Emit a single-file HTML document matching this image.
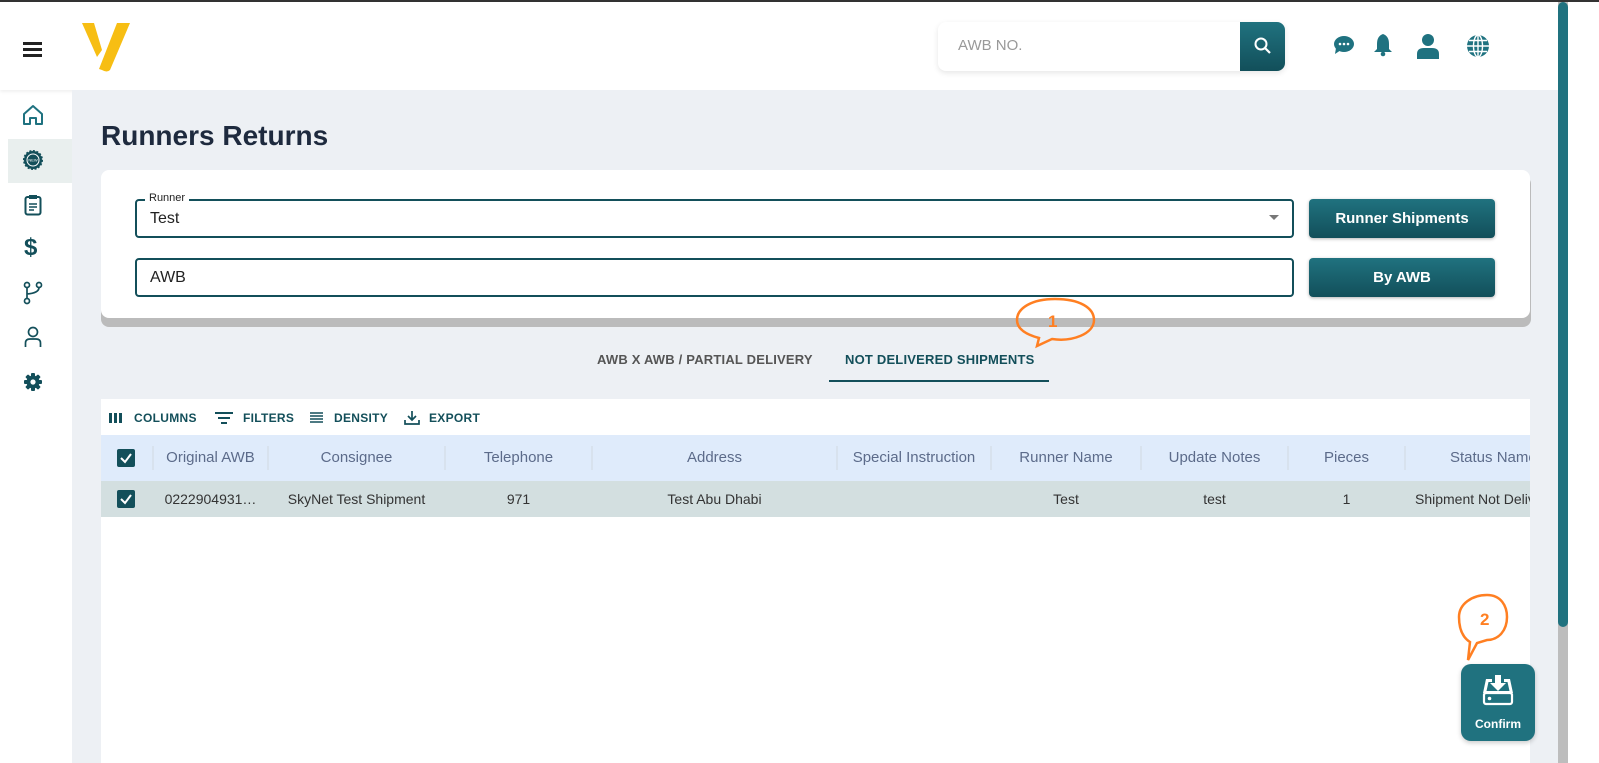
<!DOCTYPE html>
<html><head><meta charset="utf-8"><style>
*{box-sizing:border-box;margin:0;padding:0}
body{width:1599px;height:763px;overflow:hidden;background:#fff;font-family:"Liberation Sans",sans-serif;position:relative}
.abs{position:absolute}
.btn{position:absolute;left:1309px;width:186px;height:39px;border-radius:4px;background:linear-gradient(#20727f,#124f5a);color:#fff;font-weight:bold;font-size:15px;display:flex;align-items:center;justify-content:center;box-shadow:0 1px 3px rgba(0,0,0,.3)}
.field{position:absolute;left:135px;width:1159px;height:39px;border:2px solid #134f5a;border-radius:4px;font-size:16px;color:#222;padding-left:13px;display:flex;align-items:center}
.th,.td{position:absolute;display:flex;align-items:center;justify-content:center;font-size:15px;white-space:nowrap;overflow:hidden}
.th{color:#5c6b8a;top:435px;height:45px}
.td{color:#333;top:481px;height:36px;font-size:14px}
.sep{position:absolute;top:446px;width:2px;height:24px;background:#d8e2ee}
.cb{position:absolute;left:117px;width:18px;height:18px;background:#134f5a;border-radius:2px}
.tb{position:absolute;top:411px;font-size:12px;font-weight:bold;color:#134f5a;letter-spacing:.3px}
</style></head><body>
<div class="abs" style="left:0;top:0;width:1599px;height:2px;background:#333"></div>
<div class="abs" style="left:0;top:2px;width:1558px;height:88px;background:#fff;box-shadow:0 2px 3px rgba(0,0,0,.06)"></div>
<div class="abs" style="left:23px;top:42px;width:19px;height:3px;background:#222;box-shadow:0 6px 0 #222,0 12px 0 #222"></div>
<svg class="abs" style="left:80px;top:20px" width="52" height="52" viewBox="0 0 52 52"><path d="M2 3 L14 3 L22 30 L17 37 Z" fill="#f7be13"/><path d="M37 3 L50 3 L30 50 Q27 53 22 50 L19 49 Z" fill="#f7be13"/></svg>
<div class="abs" style="left:938px;top:22px;width:347px;height:49px;background:#fff;border-radius:8px;box-shadow:0 2px 6px rgba(0,0,0,.1)"></div>
<div class="abs" style="left:958px;top:37px;font-size:15px;color:#999">AWB NO.</div>
<div class="abs" style="left:1240px;top:22px;width:45px;height:49px;border-radius:0 8px 8px 0;background:linear-gradient(#20727f,#124f5a)"></div>
<svg class="abs" style="left:1253px;top:36px" width="20" height="20" viewBox="0 0 20 20"><circle cx="8" cy="8" r="5.5" fill="none" stroke="#fff" stroke-width="2"/><path d="M12 12 L17 17" stroke="#fff" stroke-width="2.2"/></svg>
<svg class="abs" style="left:1333px;top:34px" width="22" height="22" viewBox="0 0 22 22"><ellipse cx="11" cy="10" rx="10" ry="8" fill="#1f7280"/><path d="M3 14 L2 20 L8 16Z" fill="#1f7280"/><circle cx="7" cy="10" r="1.3" fill="#fff"/><circle cx="11" cy="10" r="1.3" fill="#fff"/><circle cx="15" cy="10" r="1.3" fill="#fff"/></svg>
<svg class="abs" style="left:1373px;top:33px" width="20" height="24" viewBox="0 0 20 24"><path d="M10 1 Q16 3 16 11 L16 16 L19 19 L1 19 L4 16 L4 11 Q4 3 10 1Z" fill="#1f7280"/><circle cx="10" cy="21" r="2.3" fill="#1f7280"/></svg>
<svg class="abs" style="left:1416px;top:33px" width="24" height="26" viewBox="0 0 24 26"><circle cx="12" cy="7" r="6" fill="#1f7280"/><path d="M1 26 L1 21 Q1 15 8 15 L16 15 Q23 15 23 21 L23 26Z" fill="#1f7280"/></svg>
<svg class="abs" style="left:1466px;top:34px" width="24" height="24" viewBox="0 0 24 24"><circle cx="12" cy="12" r="11" fill="#1f7280"/><g fill="none" stroke="#fff" stroke-width="1.4"><ellipse cx="12" cy="12" rx="4.5" ry="11"/><path d="M12 1 V23 M1 12 H23 M3 6.5 H21 M3 17.5 H21"/></g></svg>
<div class="abs" style="left:1558px;top:2px;width:10px;height:761px;background:#bdbdbd"></div>
<div class="abs" style="left:1558px;top:2px;width:10px;height:625px;background:#20727f;border-radius:5px"></div>
<div class="abs" style="left:72px;top:90px;width:1486px;height:673px;background:#edf0f4"></div>
<div class="abs" style="left:8px;top:139px;width:64px;height:44px;background:#e9efee"></div>
<svg class="abs" style="left:22px;top:104px" width="22" height="22" viewBox="0 0 22 22"><path d="M2 10 L11 2 L20 10 L20 20 L14 20 L14 14 L8 14 L8 20 L2 20Z" fill="none" stroke="#1f7280" stroke-width="2" stroke-linejoin="round"/></svg>
<svg class="abs" style="left:22px;top:149px" width="22" height="22" viewBox="0 0 22 22"><circle cx="11" cy="11" r="9" fill="#134f5a" stroke="#134f5a" stroke-width="2" stroke-dasharray="2 1.5"/><circle cx="11" cy="11" r="6" fill="none" stroke="#fff" stroke-width="1"/><text x="11" y="12.5" font-size="4" fill="#fff" text-anchor="middle" font-family="Liberation Sans">NEW</text></svg>
<svg class="abs" style="left:24px;top:194px" width="18" height="22" viewBox="0 0 18 22"><rect x="1.5" y="3" width="15" height="17.5" rx="2" fill="none" stroke="#134f5a" stroke-width="2"/><rect x="5" y="1" width="8" height="4" fill="#134f5a"/><path d="M5 10 H13 M5 13 H13 M5 16 H10" stroke="#134f5a" stroke-width="1.6"/></svg>
<div class="abs" style="left:24px;top:234px;font-size:24px;font-weight:bold;color:#134f5a">$</div>
<svg class="abs" style="left:22px;top:281px" width="22" height="24" viewBox="0 0 22 24"><g fill="none" stroke="#134f5a" stroke-width="1.7"><circle cx="5" cy="4" r="2.5"/><circle cx="17" cy="4" r="2.5"/><circle cx="5" cy="20" r="2.5"/><path d="M5 6.5 V17.5 M17 6.5 Q17 12 5 13"/></g></svg>
<svg class="abs" style="left:24px;top:326px" width="18" height="22" viewBox="0 0 18 22"><g fill="none" stroke="#134f5a" stroke-width="1.7"><circle cx="9" cy="6" r="4.5"/><path d="M1.5 21 V17 Q1.5 13 6 13 H12 Q16.5 13 16.5 17 V21"/></g></svg>
<svg class="abs" style="left:23px;top:372px" width="20" height="20" viewBox="0 0 20 20"><g fill="#134f5a"><rect x="8" y="1" width="4" height="18" rx="1"/><rect x="8" y="1" width="4" height="18" rx="1" transform="rotate(45 10 10)"/><rect x="8" y="1" width="4" height="18" rx="1" transform="rotate(90 10 10)"/><rect x="8" y="1" width="4" height="18" rx="1" transform="rotate(135 10 10)"/><circle cx="10" cy="10" r="6.5"/></g><circle cx="10" cy="10" r="2.6" fill="#fff"/></svg>
<div class="abs" style="left:101px;top:120px;font-size:28px;font-weight:bold;color:#1e2a3e">Runners Returns</div>
<div class="abs" style="left:101px;top:176px;width:1430px;height:151px;background:#bbb;border-radius:8px"></div>
<div class="abs" style="left:101px;top:170px;width:1429px;height:148px;background:#fff;border-radius:8px"></div>
<div class="field" style="top:199px">Test</div>
<div class="abs" style="left:145px;top:192px;background:#fff;padding:0 4px;font-size:11px;color:#222">Runner</div>
<div class="abs" style="left:1269px;top:215px;border-left:5px solid transparent;border-right:5px solid transparent;border-top:5px solid #777"></div>
<div class="field" style="top:258px">AWB</div>
<div class="btn" style="top:199px">Runner Shipments</div>
<div class="btn" style="top:258px">By AWB</div>
<div class="abs" style="left:597px;top:352px;font-size:13px;font-weight:bold;color:#555;letter-spacing:.2px">AWB X AWB / PARTIAL DELIVERY</div>
<div class="abs" style="left:845px;top:352px;font-size:13px;font-weight:bold;color:#134f5a;letter-spacing:.2px">NOT DELIVERED SHIPMENTS</div>
<div class="abs" style="left:829px;top:380px;width:220px;height:2px;background:#134f5a"></div>
<svg class="abs" style="left:1010px;top:296px" width="92" height="56" viewBox="0 0 92 56"><path d="M45 3 C70 3 84 12 84 24 C84 38 62 46 42 43 L27 50 L29 42 C14 38 7 32 7 24 C7 12 22 3 45 3Z" fill="none" stroke="#ff7f22" stroke-width="2.5"/><text x="38" y="31" font-family="Liberation Sans" font-weight="bold" font-size="17" fill="#ff7f22">1</text></svg>
<div class="abs" style="left:101px;top:399px;width:1429px;height:364px;background:#fff"></div>
<svg class="abs" style="left:109px;top:412px" width="14" height="12"><rect x="0" y="1" width="3" height="10" fill="#134f5a"/><rect x="5" y="1" width="3" height="10" fill="#134f5a"/><rect x="10" y="1" width="3" height="10" fill="#134f5a"/></svg>
<div class="tb" style="left:134px">COLUMNS</div>
<svg class="abs" style="left:215px;top:411px" width="18" height="14"><path d="M0 2H18M3 7H15M6 12H12" stroke="#134f5a" stroke-width="2"/></svg>
<div class="tb" style="left:243px">FILTERS</div>
<svg class="abs" style="left:310px;top:412px" width="14" height="12"><path d="M0 1H13M0 4H13M0 7H13M0 10H13" stroke="#134f5a" stroke-width="1.5"/></svg>
<div class="tb" style="left:334px">DENSITY</div>
<svg class="abs" style="left:404px;top:410px" width="16" height="16"><path d="M8 1V10M4 6L8 10L12 6M1 10V14H15V10" fill="none" stroke="#134f5a" stroke-width="1.7"/></svg>
<div class="tb" style="left:429px">EXPORT</div>
<div class="abs" style="left:101px;top:435px;width:1429px;height:46px;background:#dfebfb"></div>
<div class="abs" style="left:101px;top:481px;width:1429px;height:36px;background:#d3dfe0"></div>
<div class="cb" style="top:449px"></div><svg class="abs" style="left:117px;top:449px" width="18" height="18"><path d="M4 9L8 13L14 5" fill="none" stroke="#fff" stroke-width="2"/></svg>
<div class="cb" style="top:490px"></div><svg class="abs" style="left:117px;top:490px" width="18" height="18"><path d="M4 9L8 13L14 5" fill="none" stroke="#fff" stroke-width="2"/></svg>
<div class="sep" style="left:152px"></div><div class="sep" style="left:267px"></div><div class="sep" style="left:444px"></div><div class="sep" style="left:591px"></div><div class="sep" style="left:836px"></div><div class="sep" style="left:990px"></div><div class="sep" style="left:1140px"></div><div class="sep" style="left:1287px"></div><div class="sep" style="left:1404px"></div>
<div class="th" style="left:154px;width:113px">Original AWB</div>
<div class="th" style="left:269px;width:175px">Consignee</div>
<div class="th" style="left:446px;width:145px">Telephone</div>
<div class="th" style="left:593px;width:243px">Address</div>
<div class="th" style="left:838px;width:152px">Special Instruction</div>
<div class="th" style="left:992px;width:148px">Runner Name</div>
<div class="th" style="left:1142px;width:145px">Update Notes</div>
<div class="th" style="left:1289px;width:115px">Pieces</div>
<div class="th" style="left:1406px;width:124px;justify-content:flex-start;padding-left:44px">Status Name</div>
<div class="td" style="left:154px;width:113px">0222904931…</div>
<div class="td" style="left:269px;width:175px">SkyNet Test Shipment</div>
<div class="td" style="left:446px;width:145px">971</div>
<div class="td" style="left:593px;width:243px">Test Abu Dhabi</div>
<div class="td" style="left:992px;width:148px">Test</div>
<div class="td" style="left:1142px;width:145px">test</div>
<div class="td" style="left:1289px;width:115px">1</div>
<div class="td" style="left:1406px;width:124px;justify-content:flex-start;padding-left:9px">Shipment Not Delivered</div>
<svg class="abs" style="left:1452px;top:592px" width="70" height="78" viewBox="0 0 70 78"><path d="M35 3 C49 3 55 14 55 25 C55 38 47 48 35 48 L25 51 L16 68 L18 50 C10 45 7 36 7 25 C7 12 20 3 35 3Z" fill="none" stroke="#ff7f22" stroke-width="2.5"/><text x="28" y="33" font-family="Liberation Sans" font-weight="bold" font-size="17" fill="#ff7f22">2</text></svg>
<div class="abs" style="left:1461px;top:664px;width:74px;height:77px;background:#20727f;border-radius:10px;box-shadow:0 2px 5px rgba(0,0,0,.2)"></div>
<svg class="abs" style="left:1480px;top:673px" width="36" height="38" viewBox="0 0 36 38"><path d="M15 2 H21 V10 H26 L18 18 L10 10 H15Z" fill="#fff"/><path d="M3 20 L6 6 H12 V9 H8.5 L6.5 18 H29.5 L27.5 9 H24 V6 H30 L33 20Z" fill="#fff"/><rect x="4" y="20" width="28" height="11" rx="2" fill="none" stroke="#fff" stroke-width="2.2"/><circle cx="9.5" cy="25.5" r="1.8" fill="#fff"/></svg>
<div class="abs" style="left:1461px;top:717px;width:74px;text-align:center;color:#fff;font-size:12px;font-weight:bold">Confirm</div>
</body></html>
